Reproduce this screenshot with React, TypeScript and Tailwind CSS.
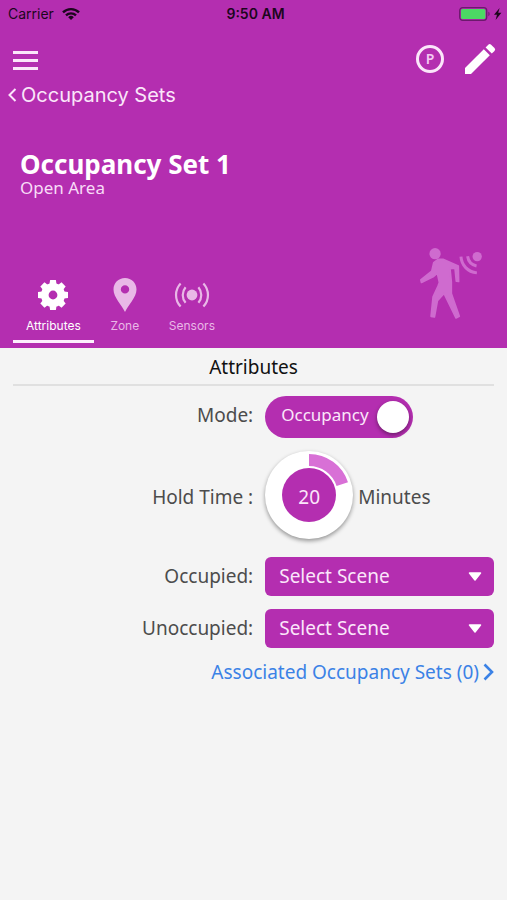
import { useState } from "react";

const scenes = ["Select Scene"];

function WifiIcon() {
  return (
    <svg width="18" height="14" viewBox="0 0 18 14" aria-hidden="true" fill="none" stroke="currentColor" strokeWidth="2.4">
      <path d="M1 5.4a11.4 11.4 0 0 1 16 0" />
      <path d="M4 8.4a7.2 7.2 0 0 1 10 0" />
      <path d="M9 13 6.2 10.2a4 4 0 0 1 5.6 0z" fill="currentColor" stroke="none" />
    </svg>
  );
}

function BatteryIcon() {
  return (
    <svg width="44" height="14" viewBox="0 0 44 14" aria-hidden="true">
      <rect x="0.7" y="0.7" width="27" height="12.6" rx="3" fill="none" stroke="#6b1a6c" strokeWidth="1.3" />
      <rect x="2" y="2" width="24.4" height="10" rx="1.6" fill="#4cd964" />
      <path d="M29.4 4.8c1.6.5 1.6 3.9 0 4.4z" fill="#6b1a6c" />
      <path d="M40.6 1 35 7.8h3L36.6 13l5.8-7.2h-3.2z" fill="#1c061d" />
    </svg>
  );
}

function PencilIcon() {
  return (
    <svg width="32" height="32" viewBox="0 0 32 32" aria-hidden="true" fill="#fff">
      <path d="M1 25 19.800 6.200l6 6L7 31H1z" />
      <path d="m21.600 4.400 2.700-2.700a2 2 0 0 1 2.800 0l3.400 3.400a2 2 0 0 1 0 2.800L27.800 10.600z" />
    </svg>
  );
}

function GearIcon() {
  const teeth = [0, 45, 90, 135, 180, 225, 270, 315];
  return (
    <svg width="30" height="30" viewBox="-15 -15 30 30" aria-hidden="true">
      {teeth.map((angle) => (
        <path key={angle} d="M-3.800-9-2.900-15H2.900L3.800-9z" fill="currentColor" transform={`rotate(${angle})`} />
      ))}
      <circle r="8.200" fill="none" stroke="currentColor" strokeWidth="7.600" />
    </svg>
  );
}

function PinIcon() {
  return (
    <svg width="24" height="34" viewBox="0 0 24 34" aria-hidden="true">
      <path
        fill="currentColor"
        fillRule="evenodd"
        d="M12 0C5.400 0 .5 5 .5 11.400.5 19.500 9 27 12 34c3-7 11.500-14.500 11.500-22.600C23.500 5 18.600 0 12 0zm0 7.200a4.200 4.200 0 1 1 0 8.400 4.200 4.200 0 0 1 0-8.400z"
      />
    </svg>
  );
}

function SensorIcon() {
  return (
    <svg width="36" height="26" viewBox="0 0 36 26" aria-hidden="true" fill="none" stroke="currentColor" strokeWidth="2.200">
      <circle cx="18" cy="13" r="5.400" fill="currentColor" stroke="none" />
      <path d="M11.600 5.200a12 12 0 0 0 0 15.600M24.400 5.200a12 12 0 0 1 0 15.600" />
      <path d="M6.600 1.400a17 17 0 0 0 0 23.200M29.400 1.400a17 17 0 0 1 0 23.200" />
    </svg>
  );
}

function MotionIcon() {
  return (
    <svg width="65" height="73" viewBox="115 50 195 220" aria-hidden="true" fill="#cf6bcf" className="shrink-0">
      <circle cx="166" cy="70" r="17" />
      <circle cx="293" cy="79" r="14" />
      <path d="M264 78c2 14 12 26 27 29M244 79c2 26 20 46 48 49" fill="none" stroke="#cf6bcf" strokeWidth="9" />
      <path
        d="M176 87 162 97 156 123 123 149 125 157 160 140 173 129 179 157 175 168 160 200 154 259 164 261 173 212 193 190 229 264 239 259 215 190 215 155 211 115 226 114 230 153 237 154 236 107 190 87z"
        stroke="#cf6bcf"
        strokeWidth="5"
        strokeLinejoin="round"
      />
    </svg>
  );
}

const tabs = [
  { name: "Attributes", icon: <GearIcon /> },
  { name: "Zone", icon: <PinIcon /> },
  { name: "Sensors", icon: <SensorIcon /> },
];

function SceneSelect({ id }: { id: string }) {
  return (
    <div className="relative">
      <select
        id={id}
        className="block h-[39px] w-full appearance-none rounded-md bg-[#b42eb0] pr-10 pl-[14px] text-[19px] text-[#fbe6fa]"
      >
        {scenes.map((scene) => (
          <option key={scene}>{scene}</option>
        ))}
      </select>
      <svg
        width="14"
        height="9"
        viewBox="0 0 14 9"
        aria-hidden="true"
        className="pointer-events-none absolute top-[15px] right-3"
      >
        <path d="M1.500 1h11L7 8z" fill="#fff" stroke="#fff" strokeWidth="1.500" strokeLinejoin="round" />
      </svg>
    </div>
  );
}

function HoldDial({ value, onChange }: { value: number; onChange: (value: number) => void }) {
  const angle = (value / 100) * 2 * Math.PI;
  const point = (radius: number) => `${44 + radius * Math.sin(angle)} ${44 - radius * Math.cos(angle)}`;
  const large = value > 50 ? 1 : 0;
  return (
    <div className="relative size-[88px] shrink-0 rounded-full bg-white shadow-[0_2px_4px_rgba(0,0,0,0.4)]">
      <svg width="88" height="88" viewBox="0 0 88 88" aria-hidden="true">
        <path d={`M44 3A41 41 0 ${large} 1 ${point(41)}L${point(29)}A29 29 0 ${large} 0 44 15z`} fill="#d870d6" />
        <circle cx="44" cy="44" r="27" fill="#b42eb0" />
      </svg>
      <span className="absolute inset-0 flex items-center justify-center pt-1 text-[19px] text-[#fbe6fa]">{value}</span>
      <input
        id="hold"
        type="range"
        min={0}
        max={99}
        value={value}
        onChange={(e) => onChange(Number(e.target.value))}
        className="absolute inset-0 size-full cursor-pointer opacity-0"
      />
    </div>
  );
}

export default function App() {
  const [active, setActive] = useState("Attributes");
  const [occupancy, setOccupancy] = useState(true);
  const [hold, setHold] = useState(20);

  return (
    <div className="min-h-screen bg-[#f4f4f4] font-['Noto_Sans',sans-serif] text-[#4c4c4c]">
      <header className="bg-[#b42eb0] pb-[5px] text-white">
        <div className="grid h-7 grid-cols-[1fr_auto_1fr] items-center pr-1 pl-2 font-['Inter',sans-serif] text-sm text-[#1c061d]">
          <div className="flex items-center gap-2">
            <span>Carrier</span>
            <WifiIcon />
          </div>
          <span className="font-semibold">9:50 AM</span>
          <div className="flex justify-end">
            <BatteryIcon />
          </div>
        </div>

        <div className="flex h-[53px] items-center justify-between pt-2 pr-[11px] pl-[13px]">
          <button type="button" aria-label="Menu" className="flex w-[25px] flex-col gap-[5px] pt-1">
            <span className="h-[3px] bg-[#fbe6fa]" />
            <span className="h-[3px] bg-[#fbe6fa]" />
            <span className="h-[3px] bg-[#fbe6fa]" />
          </button>
          <div className="flex items-center gap-5">
            <button
              type="button"
              aria-label="Programming"
              className="flex size-7 items-center justify-center rounded-full border-[3px] border-[#fbe6fa] text-sm font-semibold text-[#f3c8f2]"
            >
              P
            </button>
            <button type="button" aria-label="Edit">
              <PencilIcon />
            </button>
          </div>
        </div>

        <a href="#sets" className="flex h-7 items-center gap-1 pl-2 font-['Inter',sans-serif] text-xl text-[#fbe6fa]">
          <svg width="9" height="14" viewBox="0 0 9 14" aria-hidden="true" fill="none" stroke="currentColor" strokeWidth="2">
            <path d="M7.500 1 1.500 7l6 6" />
          </svg>
          Occupancy Sets
        </a>

        <div className="px-5 pt-10">
          <h1 className="text-[26px] leading-[30px] font-bold">Occupancy Set 1</h1>
          <p className="text-[17px] leading-[18px] text-[#f8dcf7]">Open Area</p>
        </div>

        <div className="flex items-start justify-between pt-[50px] pr-6 pl-[13px]">
          <nav className="flex pt-7">
            {tabs.map((tab) => (
              <button
                key={tab.name}
                type="button"
                onClick={() => setActive(tab.name)}
                className={
                  "flex min-w-[62px] flex-col items-center border-b-[3px] px-[13px] pb-[3px] font-['Inter',sans-serif] text-xs leading-[22px] " +
                  (active === tab.name ? "border-[#fdeefd] text-white" : "border-transparent text-[#e9b8e7]")
                }
              >
                <span className="flex h-10 items-center">{tab.icon}</span>
                <span>{tab.name}</span>
              </button>
            ))}
          </nav>
          <MotionIcon />
        </div>
      </header>

      <main className="px-[13px]">
        <h2 className="h-[38px] border-b-2 border-[#e0e0e0] text-center text-[19px] leading-[38px] text-[#111]">
          Attributes
        </h2>

        <div className="mt-[10px] grid grid-cols-[21fr_20fr] items-center gap-x-3 gap-y-[13px] text-[19px]">
          <label htmlFor="mode" className="pb-1 text-right">
            Mode:
          </label>
          <label className="flex h-[42px] w-[148px] cursor-pointer items-center justify-between rounded-full bg-[#b42eb0] pr-1 pl-4 text-[17px] text-[#fbe6fa]">
            <input
              id="mode"
              type="checkbox"
              checked={occupancy}
              onChange={(e) => setOccupancy(e.target.checked)}
              className="sr-only"
            />
            <span className="pb-1">Occupancy</span>
            <span className="size-8 rounded-full bg-white shadow-[0_2px_4px_rgba(0,0,0,0.4)]" />
          </label>

          <label htmlFor="hold" className="pt-1 text-right">
            Hold Time :
          </label>
          <div className="flex items-center gap-[5px]">
            <HoldDial value={hold} onChange={setHold} />
            <span className="pt-1">Minutes</span>
          </div>
        </div>

        <div className="mt-[18px] grid grid-cols-[21fr_20fr] items-center gap-x-3 gap-y-[13px] text-[19px]">
          <label htmlFor="occupied" className="text-right">
            Occupied:
          </label>
          <SceneSelect id="occupied" />
          <label htmlFor="unoccupied" className="text-right">
            Unoccupied:
          </label>
          <SceneSelect id="unoccupied" />
        </div>

        <a href="#associated" className="mt-[10px] flex items-center justify-end gap-1 text-[19px] leading-7 text-[#3b82e6]">
          Associated Occupancy Sets (0)
          <svg width="11" height="18" viewBox="0 0 11 18" aria-hidden="true" fill="none" stroke="currentColor" strokeWidth="2.600">
            <path d="m1.500 1.500 7.500 7.500-7.500 7.500" />
          </svg>
        </a>
      </main>
    </div>
  );
}
